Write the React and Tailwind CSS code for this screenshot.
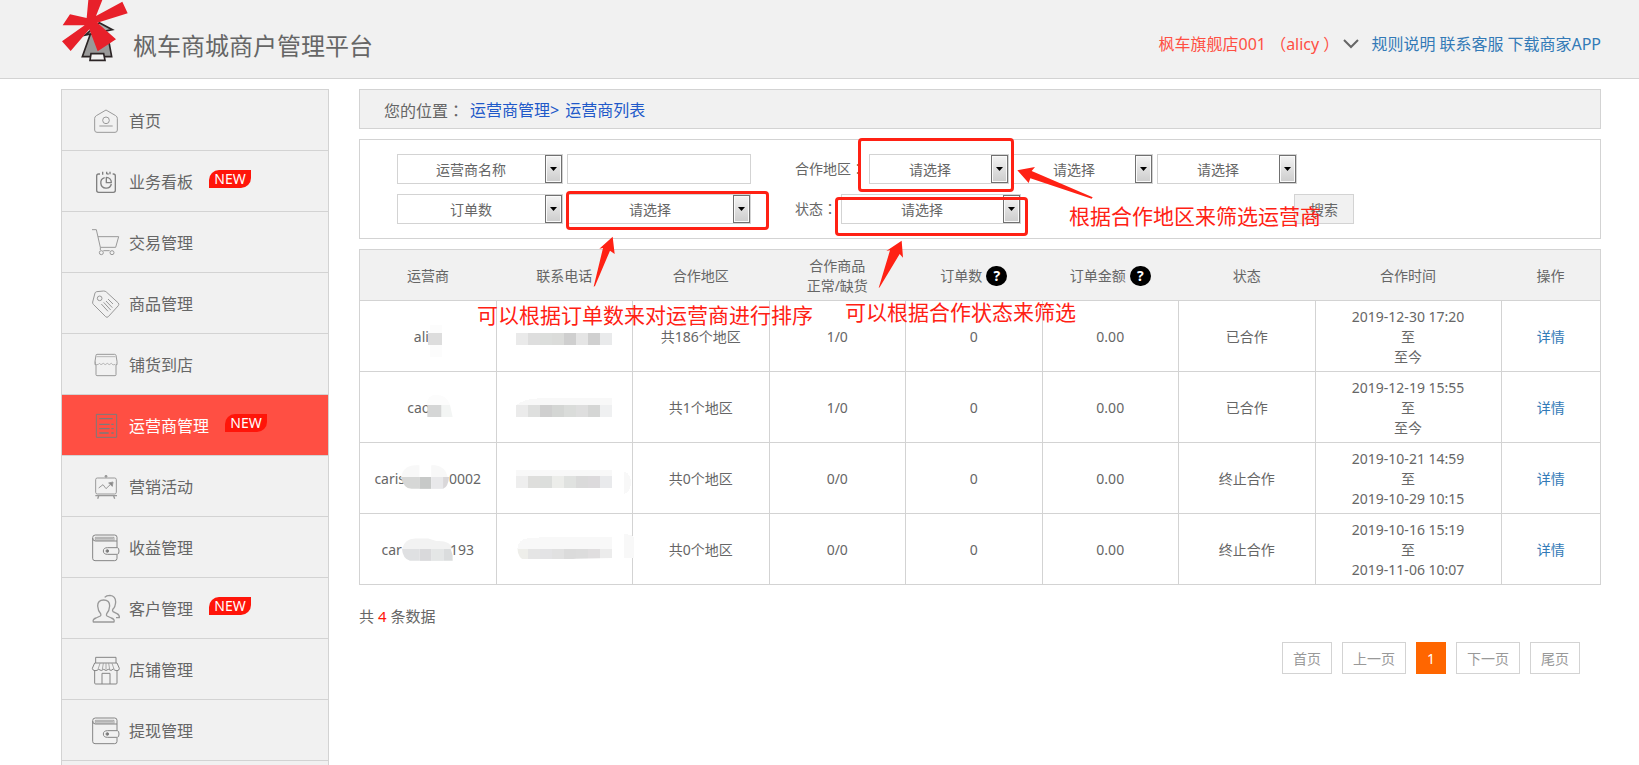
import React from "react";

const MENU = [
  { label: "首页", icon: "home" },
  { label: "业务看板", icon: "board", isNew: true },
  { label: "交易管理", icon: "cart" },
  { label: "商品管理", icon: "tag" },
  { label: "铺货到店", icon: "shop" },
  { label: "运营商管理", icon: "list", isNew: true, active: true },
  { label: "营销活动", icon: "marketing" },
  { label: "收益管理", icon: "wallet" },
  { label: "客户管理", icon: "users", isNew: true },
  { label: "店铺管理", icon: "store" },
  { label: "提现管理", icon: "wallet" },
];

const ICONS = {
  home: (
    <>
      <path d="M42 12 71 29Q76 32 76 37V72Q76 79 69 79H15Q8 79 8 72V37Q8 32 13 29Z" />
      <circle cx="42" cy="43" r="10" />
      <path d="M22 60H62" />
    </>
  ),
  board: (
    <g strokeWidth="4" stroke="#808080">
      <path d="M24 21H20Q14 21 14 27V70Q14 76 20 76H64Q70 76 70 70V27Q70 21 64 21H62" />
      <path d="M30 21H34M46 21H50M32 14V22M44 14V22M54 14V22" />
      <path d="M38 32A16 16 0 1 0 58 51" />
      <path d="M43 31V47H58A15 15 0 0 0 43 31Z" />
    </g>
  ),
  cart: (
    <>
      <path d="M0 5H13L25 58H71L80 26H18" />
      <path d="M25 58V66M34 68H53" />
      <circle cx="28" cy="74" r="6" />
      <circle cx="60" cy="74" r="6" />
    </>
  ),
  tag: (
    <>
      <path d="M9 12Q10 9 14 8L35 6Q40 6 43 9L79 42Q82 46 79 50L49 83Q45 87 41 83L4 46Q1 43 2 39Z" />
      <circle cx="23" cy="28" r="7" />
      <path d="M48 30 63 45M42 36 61 56M35 40 56 63M28 45 48 67" />
    </>
  ),
  shop: (
    <>
      <path d="M15 13H68Q71 13 72 16L75 34V44H72V74Q72 77 69 77H15Q12 77 12 74V44H9V34L12 16Q12 13 15 13Z" />
      <path d="M10 34Q9 44 14 44Q21 44 22 40Q26 48 34 40Q39 48 46 40Q51 48 58 40Q62 48 70 43M14 20H70" strokeWidth="2" />
    </>
  ),
  list: (
    <g stroke="#7b7b7b">
      <path d="M13 10H74V79H13Z" />
      <path d="M22 23H62M22 40H53M22 53H53M22 66H50" strokeWidth="4" />
      <path d="M58 40H65M58 53H65M58 66H65" strokeWidth="4" />
    </g>
  ),
  marketing: (
    <>
      <rect x="11" y="18" width="62" height="48" rx="5" />
      <path d="M10 71H75M20 72 17 80M65 72 68 80" strokeWidth="4" />
      <circle cx="42" cy="13" r="3" fill="#999" />
      <path d="M20 48 33 38 42 50 58 35" />
      <path d="M50 33 63 30 61 43Z" fill="#888" />
    </>
  ),
  wallet: (
    <g stroke="#858585">
      <path d="M75 44V24M75 66V76Q75 83 68 83H9Q2 83 2 76V14Q2 6 10 6H68Q75 6 75 13V24H10Q2 24 2 15" />
      <path d="M10 23V13H66V23M12 17H64M12 21H64" strokeWidth="2" />
      <path d="M76 44H47Q34 44 34 54T47 64H76Q81 64 81 54T76 44Z" />
      <circle cx="46" cy="54" r="4" fill="#777" />
    </g>
  ),
  users: (
    <g strokeWidth="4">
      <path d="M4 84Q1 76 12 72L25 66Q28 64 26 59Q18 51 17 36Q17 18 35 18T53 36Q52 51 44 59Q42 64 45 66L58 72Q69 76 66 84Z" />
      <path d="M38 10Q43 4 54 4Q71 6 71 24Q70 39 63 45Q60 49 63 53L75 59Q83 63 82 71H72" />
    </g>
  ),
  store: (
    <g stroke="#858585">
      <path d="M11 24V7H72V24M8 24H75L82 40Q82 47 75 47T64 42Q58 50 49 43Q42 50 35 43Q28 50 20 43Q16 47 9 47T1 40Z" />
      <path d="M8 48V84Q8 87 11 87H72Q75 87 75 84V48M30 87V55H54V87" />
      <path d="M24 25 18 43M34 25 31 43M42 25V43M50 25 53 43M60 25 66 42" strokeWidth="2" />
    </g>
  ),
};

const COLUMNS = [
  { label: "运营商", width: "w-[11%]" },
  { label: "联系电话", width: "w-[11%]" },
  { label: "合作地区", width: "w-[11%]" },
  { label: "合作商品", second: "正常/缺货", width: "w-[11%]" },
  { label: "订单数", help: true, width: "w-[11%]" },
  { label: "订单金额", help: true, width: "w-[11%]" },
  { label: "状态", width: "w-[11%]" },
  { label: "合作时间", width: "w-[15%]" },
  { label: "操作", width: "w-[8%]" },
];

// Names and phone numbers are masked; each mask is a strip of 12px blocks.
const ROWS = [
  {
    name: ["alic", ""],
    nameMask: (
      <svg className="h-6 w-[14px] -ml-2 overflow-visible" viewBox="0 0 42 72">
        <path d="M6 0H42V24H6ZM6 60H42V95H6Z" fill="#fcfcfc" />
        <path d="M0 24H42V60H0Z" fill="#dddddd" />
      </svg>
    ),
    phone: ["#eaeaea", "#dedede", "#dcdedc", "#dbdcda", "#cfcfcf", "#e5e5e5", "#d0d0d0", "#e9eaeb"],
    region: "共186个地区",
    goods: "1/0",
    status: "已合作",
    from: "2019-12-30 17:20",
    to: "至今",
  },
  {
    name: ["cao", ""],
    nameMask: (
      <svg className="h-6 w-[22px] -ml-1 overflow-visible" viewBox="0 0 66 72">
        <path d="M2 27Q4 -4 30 -4Q62 -4 72 27Z" fill="#fcfcfc" />
        <path d="M46 27H72L80 63H46Z" fill="#f3f5f4" />
        <path d="M4 27H46V63H4Z" fill="#d5d6d6" />
      </svg>
    ),
    faint: "M0 27Q30 7 70 7H288V27Z",
    phone: ["#ebebeb", "#dedfde", "#cfcfcf", "#d4d6d4", "#dadcda", "#dedede", "#d5d6d5", "#eff0f1"],
    region: "共1个地区",
    goods: "1/0",
    status: "已合作",
    from: "2019-12-19 15:55",
    to: "至今",
  },
  {
    name: ["caris", "0002"],
    nameMask: (
      <svg className="h-6 w-[48px] -ml-1 overflow-visible" viewBox="0 0 146 72">
        <path d="M0 30Q8 -6 44 -6H56V30ZM92 -6H104Q136 -2 142 30H92Z" fill="#f8f8f8" />
        <path d="M0 30H56V66H32Q8 66 0 30Z" fill="#d6d7d6" />
        <path d="M56 30H92V66H56Z" fill="#c7c9c8" />
        <path d="M92 30H128V66H92Z" fill="#e8e8ea" />
        <path d="M128 30H146Q144 60 128 66Z" fill="#d9d7d9" />
      </svg>
    ),
    faint: "M0 10H288V30H0ZM324 13Q345 20 345 50Q343 74 324 82Z",
    phone: ["#eeeeee", "#dededc", "#dcdedc", "#ecedea", "#e0e2e0", "#dadada", "#dcdadc", "#e9eaec"],
    region: "共0个地区",
    goods: "0/0",
    status: "终止合作",
    from: "2019-10-21 14:59",
    to: "2019-10-29 10:15",
  },
  {
    name: ["car", "193"],
    nameMask: (
      <svg className="h-6 w-[52px] -mr-1 overflow-visible" viewBox="0 0 158 72">
        <path d="M0 33Q8 1 40 1H80L104 9Q146 6 154 33Z" fill="#f2f2f2" />
        <path d="M0 33H54V69H24Q2 62 0 33Z" fill="#dfe0e2" />
        <path d="M54 33H90V69H54Z" fill="#d9d9db" />
        <path d="M90 33H126V69H90Z" fill="#e4e6e6" />
        <path d="M126 33H148Q156 50 154 69H126Z" fill="#dadcdd" />
      </svg>
    ),
    faint: "M4 33Q6 2 40 0L100 -3H288V33ZM324 -12Q354 -10 354 0V60H324Z",
    clip: true,
    phone: ["#eeeeea", "#e5e5e5", "#e3e3e5", "#e1e1e1", "#dbdbdb", "#dcdcdc", "#e0dedf", "#ececec"],
    region: "共0个地区",
    goods: "0/0",
    status: "终止合作",
    from: "2019-10-16 15:19",
    to: "2019-11-06 10:07",
  },
];

function Logo() {
  return (
    <svg className="w-[70px] h-16" viewBox="60 0 210 192" aria-label="枫车">
      <path d="M152 100 127 170H215L203 105Z" fill="#999" stroke="#2c2526" strokeWidth="5" />
      <path d="M178 68 217 89 136 105Z" fill="#aaa" stroke="#2c2526" strokeWidth="5" />
      <path d="M153 161H191L195 181H150Z" fill="#f1f1f1" stroke="#2c2526" strokeWidth="5" />
      <path
        d="M145 0H187L168 48 247 5 263 40 172 68 228 118 173 154 148 88 92 153 66 124 134 76H68L90 43 140 54Z"
        fill="#e8202a"
      />
    </svg>
  );
}

// full-width colon set in the middle of its box
function Colon() {
  return <span className="font-['Noto_Sans_CJK_JP',sans-serif]">：</span>;
}

function MenuItem({ label, icon, isNew, active }) {
  return (
    <li className="border-b border-[#d3d3d3]">
      <a
        href="#"
        className={`flex items-center h-[60px] pl-[30px] text-base ${
          active ? "bg-[#ff4f43] text-white" : "text-[#666]"
        }`}
      >
        <svg className="w-7 h-7 mr-[9px] overflow-visible" viewBox="0 0 84 84" fill="none" stroke="#999" strokeWidth="3" strokeLinejoin="round">
          {ICONS[icon]}
        </svg>
        <span className="pt-0.5">{label}</span>
        {isNew && (
          <span className="ml-4 mb-1 w-[42px] h-[18px] rounded-tl-[10px] rounded-br-[10px] bg-[#ff150a] text-white text-sm leading-[18px] text-center">
            NEW
          </span>
        )}
      </a>
    </li>
  );
}

function Select({ label, value, width }) {
  return (
    <div className={`relative h-[30px] ${width}`}>
      <select
        aria-label={label}
        className="appearance-none w-full h-full pt-0.5 pr-[18px] border border-[#d3d3d3] bg-white text-sm text-[#666] [text-align-last:center]"
      >
        <option>{value}</option>
      </select>
      <span className="absolute right-px top-px w-[17px] h-7 border border-[#707070] bg-linear-to-b from-[#f3f3f3] to-[#cdcdcd] shadow-[inset_0_0_0_1px_#fafafa] pointer-events-none flex items-center justify-center">
        <svg width="7" height="4" viewBox="0 0 7 4">
          <path d="M0 0H7L3.500 4Z" fill="#000" />
        </svg>
      </span>
    </div>
  );
}

function PhoneMask({ row }) {
  return (
    <svg className="block mx-auto w-24 h-6 overflow-visible" viewBox="0 0 288 72" shapeRendering="crispEdges">
      <clipPath id="phone-mask">
        <path d="M4 33H288V60L180 62 100 69H30Q6 62 4 33Z" />
      </clipPath>
      {row.faint && <path d={row.faint} fill="#f8f8f8" />}
      <g clipPath={row.clip ? "url(#phone-mask)" : undefined}>
        {row.phone.map((color, i) => (
          <rect key={i} x={i * 36} y={row.faint ? 27 : 24} width="36" height="36" fill={color} />
        ))}
      </g>
    </svg>
  );
}

function Annotations() {
  return (
    <div className="absolute inset-0 pointer-events-none text-[21px] leading-7 text-[#ff2114] whitespace-nowrap">
      <div className="absolute left-[207px] top-[102px] w-[203px] h-[39px] border-3 border-[#ff2114] rounded" />
      <div className="absolute left-[499px] top-[49px] w-[156px] h-[54px] border-3 border-[#ff2114] rounded" />
      <div className="absolute left-[476px] top-[108px] w-[193px] h-[39px] border-3 border-[#ff2114] rounded" />

      <svg className="absolute left-[230px] top-[146px] w-[28px] h-[52px]" viewBox="0 0 84 156" fill="#ff2114">
        <path d="M71 5 77 57 63 47 18 153 14 155 42 39 31 41Z" />
      </svg>
      <svg className="absolute left-[657px] top-[76px] w-[78px] h-[34px]" viewBox="0 0 234 102" fill="#ff2114">
        <path d="M4 16 57 6 47 18 230 97 227 101 43 40 38 54Z" />
      </svg>
      <svg className="absolute left-[518px] top-[150px] w-[28px] h-[50px]" viewBox="0 0 84 150" fill="#ff2114">
        <path d="M74 5 78 56 68 45 8 145 5 147 39 34 28 36Z" />
      </svg>

      <p className="absolute left-[118px] top-[212px]">可以根据订单数来对运营商进行排序</p>
      <p className="absolute left-[486px] top-[209px]">可以根据合作状态来筛选</p>
      <p className="absolute left-[710px] top-[113px]">根据合作地区来筛选运营商</p>
    </div>
  );
}

export default function App() {
  return (
    <div className="h-screen overflow-hidden flex flex-col bg-white text-sm text-[#666] font-['Noto_Sans','Noto_Sans_CJK_SC',sans-serif]">
      <header className="flex h-[79px] shrink-0 pl-[60px] pr-[38px] bg-[#f1f1f1] border-b border-[#d3d3d3]">
        <Logo />
        <h1 className="pl-[3px] pt-3.5 self-center text-2xl">枫车商城商户管理平台</h1>
        <nav className="ml-auto pt-2.5 flex items-center gap-1 text-base text-[#337ab7]">
          <button className="flex items-center text-[#ff4f43]">
            枫车旗舰店001 （alicy ）
            <svg className="w-4 h-2.5 ml-1 mr-2" viewBox="0 0 16 10" fill="none" stroke="#666" strokeWidth="2">
              <path d="M1 1 8 8 15 1" />
            </svg>
          </button>
          <a href="#">规则说明</a>
          <a href="#">联系客服</a>
          <a href="#">下载商家APP</a>
        </nav>
      </header>

      <div className="flex flex-1 min-h-0 pt-2.5 pl-[61px] pr-[38px] gap-[30px]">
        <aside className="w-[268px] shrink-0 border border-b-0 border-[#d3d3d3] bg-[#f1f1f1]">
          <ul>
            {MENU.map((item) => (
              <MenuItem key={item.label} {...item} />
            ))}
          </ul>
        </aside>

        <main className="relative flex-1 min-w-0">
          <div className="flex items-center h-10 pl-6 pt-0.5 gap-1.5 border border-[#d3d3d3] bg-[#f1f1f1] text-base">
            <span>您的位置<Colon /></span>
            <a href="#" className="text-[#2159c9]">运营商管理&gt;</a>
            <a href="#" className="text-[#2159c9]">运营商列表</a>
          </div>

          <form className="mt-2.5 h-[100px] pl-[37px] pt-3.5 flex flex-col gap-2.5 border border-[#d3d3d3] whitespace-nowrap">
            <div className="flex gap-1">
              <Select label="查询字段" value="运营商名称" width="w-[166px]" />
              <input aria-label="运营商名称" className="w-[184px] h-[30px] px-2 border border-[#d3d3d3]" />
              <span className="ml-10 w-[70px] leading-7">合作地区<Colon /></span>
              <Select label="合作省份" value="请选择" width="w-[140px]" />
              <Select label="合作城市" value="请选择" width="w-[140px]" />
              <Select label="合作区县" value="请选择" width="w-[140px]" />
            </div>
            <div className="flex gap-1">
              <Select label="排序字段" value="订单数" width="w-[166px]" />
              <Select label="排序方式" value="请选择" width="w-[184px]" />
              <span className="ml-10 w-[42px] leading-7">状态<Colon /></span>
              <Select label="状态" value="请选择" width="w-[180px]" />
              <button type="button" className="ml-[269px] w-[60px] h-[30px] pt-0.5 border border-[#d3d3d3] bg-[#f1f1f1]">
                搜索
              </button>
            </div>
          </form>

          <table className="mt-2.5 w-full table-fixed border-collapse border border-[#d3d3d3] text-center leading-5">
            <thead>
              <tr className="bg-[#f1f1f1]">
                {COLUMNS.map((col) => (
                  <th key={col.label} className={`${col.width} h-[51px] pt-0.5 font-normal`}>
                    <div className="flex items-center justify-center gap-1">
                      <span>
                        {col.label}
                        {col.second && <span className="block">{col.second}</span>}
                      </span>
                      {col.help && (
                        <span className="w-[21px] h-5 rounded-[10px] bg-black text-white font-bold">?</span>
                      )}
                    </div>
                  </th>
                ))}
              </tr>
            </thead>
            <tbody>
              {ROWS.map((row) => (
                <tr key={row.from} className="[&>td]:border [&>td]:border-[#d3d3d3] [&>td]:pt-1.5 [&>td]:pb-1">
                  <td>
                    <div className="flex items-center justify-center">
                      {row.name[0]}
                      {row.nameMask}
                      {row.name[1]}
                    </div>
                  </td>
                  <td>
                    <PhoneMask row={row} />
                  </td>
                  <td>{row.region}</td>
                  <td>{row.goods}</td>
                  <td>0</td>
                  <td>0.00</td>
                  <td>{row.status}</td>
                  <td>
                    {row.from}
                    <br />至<br />
                    {row.to}
                  </td>
                  <td>
                    <a href="#" className="text-[#337ab7]">详情</a>
                  </td>
                </tr>
              ))}
            </tbody>
          </table>

          <p className="mt-[19px] text-[15px] leading-6">
            共 <span className="text-[#ff150a]">4</span> 条数据
          </p>

          <nav className="mt-3.5 mr-[21px] flex justify-end gap-2.5 text-[#999] [&>a]:h-8 [&>a]:px-2.5 [&>a]:leading-8 [&>a]:border [&>a]:border-[#d3d3d3]">
            <a href="#">首页</a>
            <a href="#">上一页</a>
            <a href="#" className="bg-[#ff6600] text-white border-[#ff6600]!">1</a>
            <a href="#">下一页</a>
            <a href="#">尾页</a>
          </nav>

          <Annotations />
        </main>
      </div>
    </div>
  );
}
